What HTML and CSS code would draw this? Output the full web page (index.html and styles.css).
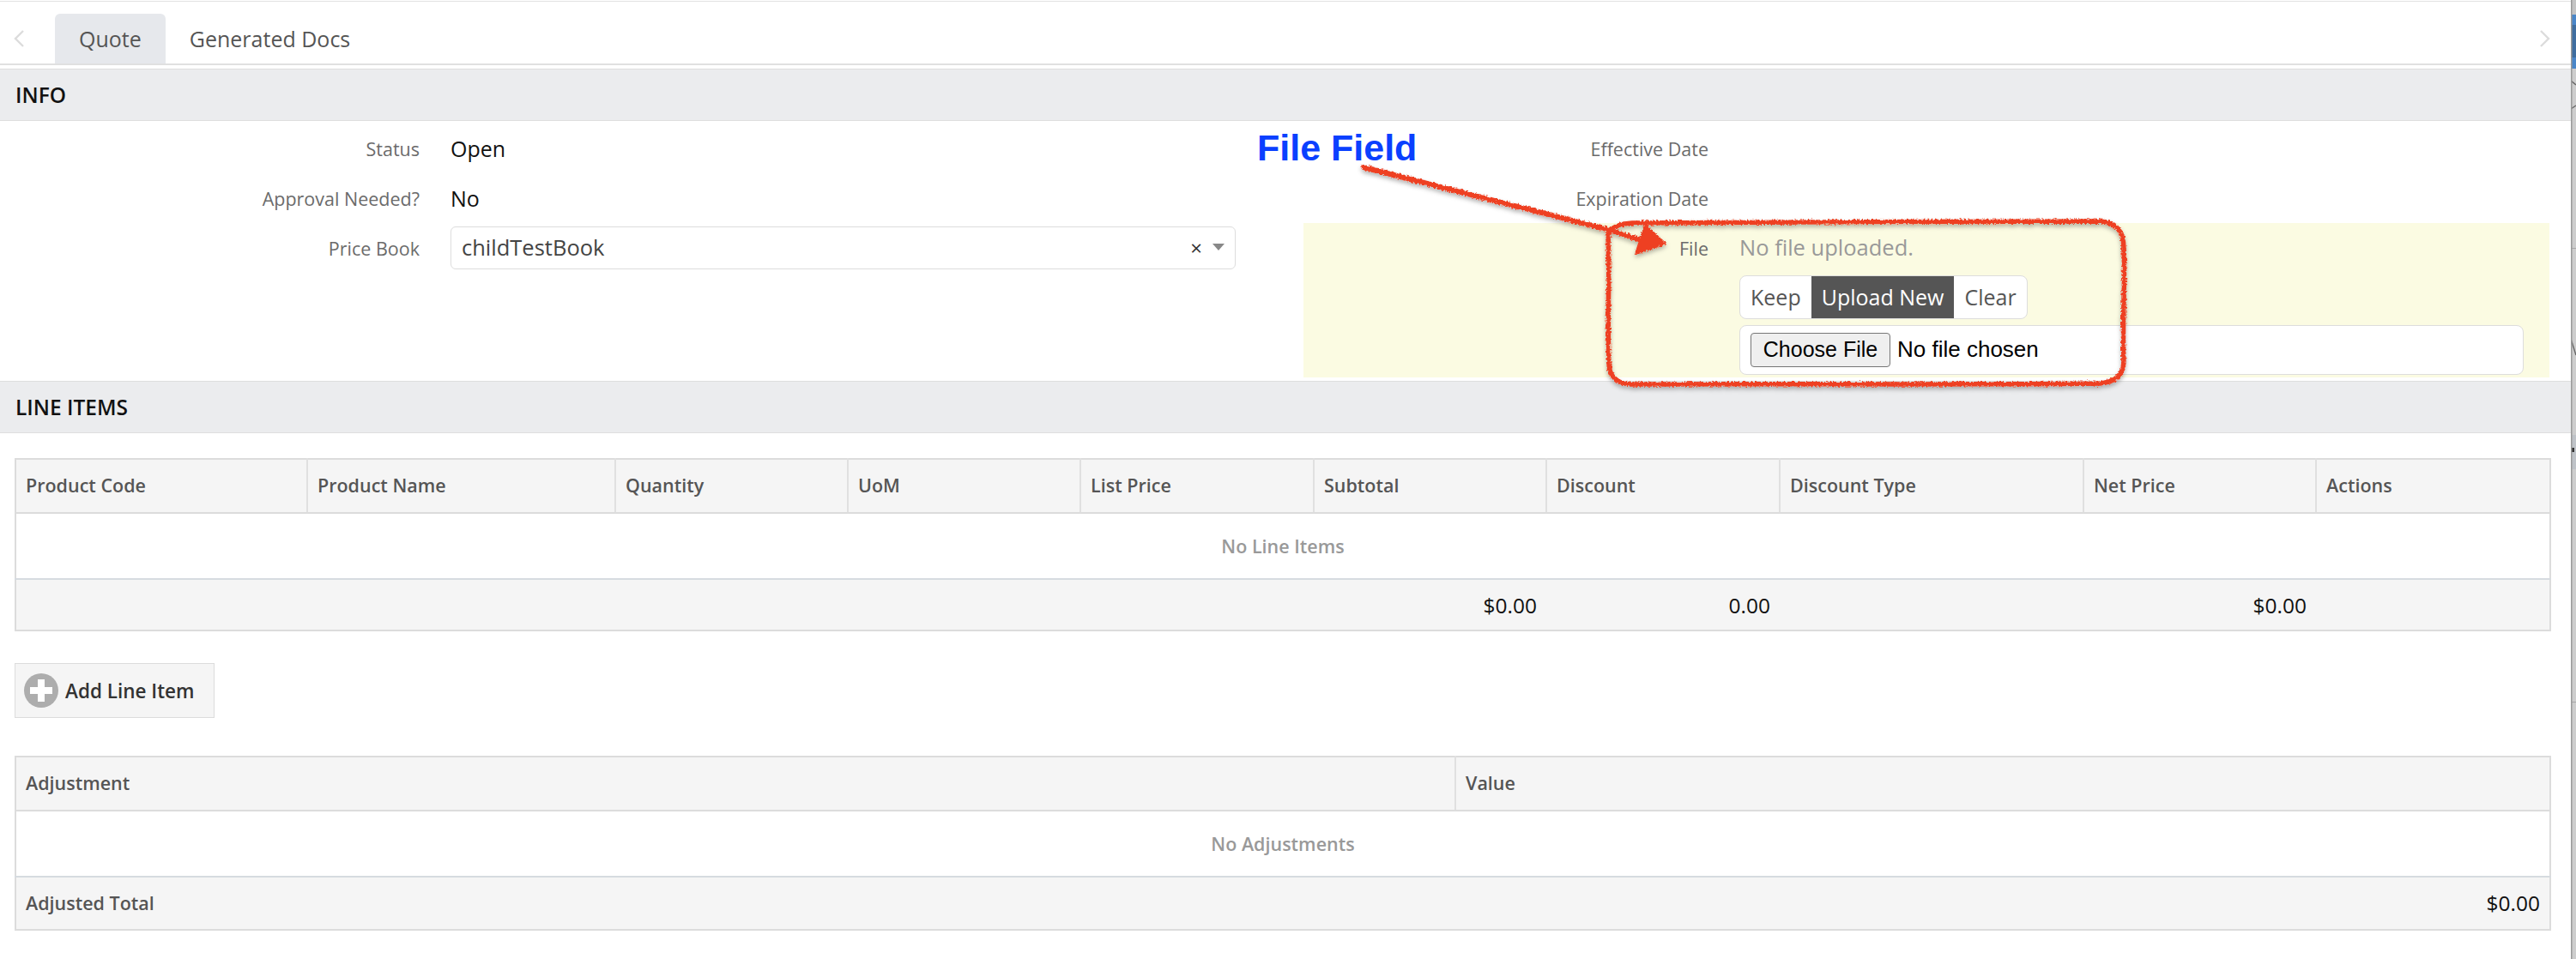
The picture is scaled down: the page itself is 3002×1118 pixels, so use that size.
FILE: index.html
```html
<!DOCTYPE html>
<html lang="en">
<head>
<meta charset="utf-8">
<title>Quote</title>
<link rel="stylesheet" href="styles.css">
</head>
<body>
<div class="page">
  <main class="main">
    <nav class="tabbar">
      <svg class="chev" width="12" height="20" viewBox="0 0 12 20"><path d="M11 1 2 10l9 9" fill="none" stroke="#dcdcdc" stroke-width="2.4"/></svg>
      <div class="tabs">
        <span class="tab tab-active">Quote</span>
        <span class="tab">Generated Docs</span>
      </div>
      <svg class="chev" width="12" height="20" viewBox="0 0 12 20"><path d="M1 1l9 9-9 9" fill="none" stroke="#dcdcdc" stroke-width="2.4"/></svg>
    </nav>

    <h2 class="section">INFO</h2>
    <section class="info">
      <div class="col">
        <div class="row"><span class="label">Status</span><span class="value">Open</span></div>
        <div class="row"><span class="label">Approval Needed?</span><span class="value">No</span></div>
        <div class="row row-select">
          <span class="label">Price Book</span>
          <div class="select">
            <span class="select-text">childTestBook</span>
            <span class="select-x">×</span>
            <span class="select-arrow"></span>
          </div>
        </div>
      </div>
      <div class="col">
        <div class="row"><span class="label">Effective Date</span><span class="value"></span></div>
        <div class="row"><span class="label">Expiration Date</span><span class="value"></span></div>
        <div class="row row-file">
          <span class="label">File</span>
          <div class="file-body">
            <div class="file-none">No file uploaded.</div>
            <div class="btn-group">
              <span class="seg">Keep</span>
              <span class="seg seg-on">Upload New</span>
              <span class="seg">Clear</span>
            </div>
            <div class="file-box">
              <button class="choose" type="button">Choose File</button>
              <span class="chosen">No file chosen</span>
            </div>
          </div>
        </div>
      </div>
    </section>

    <h2 class="section">LINE ITEMS</h2>
    <section class="items">
      <table class="grid grid-lines">
        <colgroup>
          <col class="c1"><col class="c2"><col class="c3"><col class="c4"><col class="c5">
          <col class="c6"><col class="c7"><col class="c8"><col class="c9"><col class="c10">
        </colgroup>
        <thead>
          <tr>
            <th>Product Code</th><th>Product Name</th><th>Quantity</th><th>UoM</th><th>List Price</th>
            <th>Subtotal</th><th>Discount</th><th>Discount Type</th><th>Net Price</th><th>Actions</th>
          </tr>
        </thead>
        <tbody>
          <tr class="empty"><td colspan="10">No Line Items</td></tr>
        </tbody>
        <tfoot>
          <tr>
            <td colspan="5"></td><td class="num">$0.00</td><td class="num">0.00</td><td></td><td class="num">$0.00</td><td></td>
          </tr>
        </tfoot>
      </table>

      <button class="add" type="button">
        <svg width="40" height="40" viewBox="0 0 40 40"><circle cx="20" cy="20" r="20" fill="#adadad"/><path d="M16 7h8v9h9v8h-9v9h-8v-9H7v-8h9z" fill="#fff"/></svg>
        <span>Add Line Item</span>
      </button>

      <table class="grid grid-adj">
        <colgroup><col class="a1"><col class="a2"></colgroup>
        <thead><tr><th>Adjustment</th><th>Value</th></tr></thead>
        <tbody><tr class="empty"><td colspan="2">No Adjustments</td></tr></tbody>
        <tfoot><tr><td class="total-label">Adjusted Total</td><td class="num">$0.00</td></tr></tfoot>
      </table>
    </section>
  </main>

  <aside class="strip">
    <svg width="6" height="1118" viewBox="0 0 6 1118">
      <rect width="6" height="1118" fill="#cdcdcd"/>
      <rect y="0" width="6" height="17" fill="#c4c4c4"/>
      <rect y="17" width="6" height="12" fill="#4a86c8"/>
      <rect y="29" width="6" height="38" fill="#3f6d9f"/>
      <rect y="67" width="6" height="13" fill="#4a86c8"/>
      <path d="M0 94 6 99M0 127 6 123M0 395 6 414" stroke="#666" stroke-width="1.4" fill="none"/>
      <rect y="289" width="6" height="1" fill="#a8a8a8"/>
      <rect y="507" width="6" height="40" fill="#bfc3c8"/>
      <rect y="522" width="4" height="5" fill="#333"/>
      <rect y="818" width="6" height="1" fill="#a8a8a8"/>
      <rect width="1.5" height="1118" fill="#9a9a9a"/>
    </svg>
  </aside>
</div>

<div class="callout">File Field</div>
<svg class="markup" width="3002" height="1118" viewBox="0 0 3002 1118" aria-hidden="true">
  <defs>
    <filter id="rough" x="-5%" y="-20%" width="110%" height="140%">
      <feTurbulence type="fractalNoise" baseFrequency="0.45" numOctaves="2" seed="4" result="n"/>
      <feDisplacementMap in="SourceGraphic" in2="n" scale="5" xChannelSelector="R" yChannelSelector="G" result="d"/>
      <feDropShadow in="d" dx="0" dy="3" stdDeviation="2.5" flood-color="#000" flood-opacity="0.3"/>
    </filter>
  </defs>
  <g filter="url(#rough)" fill="none" stroke="#ee4022" stroke-linecap="round" stroke-linejoin="round">
    <path stroke-width="5.5" d="M1902 260C2050 258 2300 259 2448 258C2466 259 2475 270 2475 290C2477 330 2473 370 2475 422C2474 438 2464 446 2446 447C2300 449 2050 447 1900 448C1884 447 1875 438 1875 424C1873 380 1876 320 1874 276C1875 266 1886 261 1902 260Z"/>
    <path stroke-width="6" d="M1589 195 1875 268 1922 283"/>
    <path stroke-width="2" fill="#ee4022" d="M1917 262 1941 284 1906 296Z"/>
  </g>
</svg>
</body>
</html>
```

FILE: styles.css
```css
* { box-sizing: border-box; }
html, body { margin: 0; padding: 0; background: #fff; }
body {
  position: relative;
  width: 3002px;
  height: 1118px;
  overflow: hidden;
  font-family: "Open Sans", "Liberation Sans", sans-serif;
  color: #111;
}
.page { display: flex; height: 1118px; }
.main { flex: 1; min-width: 0; padding-top: 1px; }
.strip { width: 6px; flex: none; line-height: 0; }
.strip svg { display: block; }

/* Tabs */
.tabbar {
  display: flex;
  align-items: flex-end;
  height: 75px;
  margin-bottom: 4px;
  border-top: 1px solid #e2e2e2;
  border-bottom: 2px solid #e0e0e0;
  padding: 0 24px 0 16px;
  justify-content: space-between;
}
.chev { flex: none; align-self: center; margin-top: 14px; }
.tabs { flex: 1; display: flex; margin-left: 36px; height: 58px; }
.tab {
  display: flex;
  align-items: center;
  padding: 0 28px;
  font-size: 25px;
  color: #555;
  border-radius: 6px 6px 0 0;
}
.tab-active { background: #e6e8ec; }

/* Section bars */
.section {
  margin: 0;
  height: 61px;
  padding: 0 0 0 18px;
  display: flex;
  align-items: center;
  background: #ebecee;
  border-top: 1px solid #dedede;
  border-bottom: 1px solid #dedede;
  font-size: 24.5px;
  font-weight: 600;
  color: #111;
}

/* Info */
.info {
  display: grid;
  grid-template-columns: 1452px 1452px;
  column-gap: 50px;
  height: 303px;
  padding: 3px 25px 0 17px;
}
.col { display: flex; flex-direction: column; }
.row {
  display: grid;
  grid-template-columns: 472px 1fr;
  column-gap: 36px;
  padding-right: 29px;
  height: 58px;
  align-items: center;
}
.label { text-align: right; font-size: 21.5px; color: #6b6b6b; }
.value { font-size: 25px; color: #111; }
.row-select { height: auto; align-items: start; padding-top: 4px; }
.row-select .label { padding-top: 11px; }
.select {
  display: flex;
  align-items: center;
  height: 50px;
  border: 1px solid #ddd;
  border-radius: 6px;
  padding: 0 12px 2px;
  font-size: 25.5px;
  color: #444;
}
.select-text { flex: 1; }
.select-x { font-size: 24px; color: #333; margin-right: 12px; }
.select-arrow {
  width: 0;
  height: 0;
  border-left: 7px solid transparent;
  border-right: 7px solid transparent;
  border-top: 8px solid #888;
}
.row-file {
  height: 180px;
  background: #fbfbe2;
  align-items: start;
}
.row-file .label { padding-top: 15px; }
.file-body { display: flex; flex-direction: column; align-items: flex-start; padding-top: 10px; }
.file-none { font-size: 25.5px; color: #999; height: 51px; line-height: 36px; }
.btn-group {
  display: flex;
  height: 51px;
  border: 1px solid #ddd;
  border-radius: 8px;
  background: #fff;
  overflow: hidden;
}
.seg {
  display: flex;
  align-items: center;
  padding: 0 12px 1px;
  font-size: 25px;
  color: #555;
}
.seg-on { background: #555; color: #fff; }
.file-box {
  display: flex;
  align-items: center;
  width: 914px;
  height: 58px;
  margin-top: 7px;
  padding: 0 0 1px 12px;
  border: 1px solid #ddd;
  border-radius: 8px;
  background: #fff;
  font-family: "Liberation Sans", Arial, sans-serif;
  font-size: 25px;
  color: #000;
}
.choose {
  width: 163px;
  height: 40px;
  padding: 0;
  margin-right: 8px;
  font: inherit;
  color: #000;
  background: #efefef;
  border: 1px solid #767676;
  border-radius: 4px;
}
.chosen { font-size: 26px; }

/* Tables */
.items { padding: 29px 25px 0 17px; }
.grid {
  width: 2954px;
  table-layout: fixed;
  border-collapse: collapse;
  border: 2px solid #dcdcdc;
}
.grid th {
  height: 63px;
  padding: 0 11px 2px;
  text-align: left;
  font-size: 21.5px;
  font-weight: 600;
  color: #555;
  background: #f5f5f5;
  border-left: 2px solid #e0e0e0;
  border-bottom: 2px solid #dcdcdc;
}
.grid th:first-child { border-left: 0; }
.empty td {
  height: 77px;
  text-align: center;
  font-size: 21.5px;
  font-weight: 600;
  color: #999;
  border-bottom: 2px solid #d6dbe0;
}
.grid tfoot td {
  height: 60px;
  padding: 0 11px;
  background: #f5f5f5;
}
.grid .num { text-align: right; font-size: 24.5px; color: #111; }
.grid .total-label { font-size: 21.5px; font-weight: 600; color: #555; }
.grid-adj tfoot td { height: 62px; padding-bottom: 2px; }
.c1 { width: 340px; } .c2 { width: 359px; } .c3 { width: 271px; } .c4 { width: 271px; }
.c5 { width: 272px; } .c6 { width: 271px; } .c7 { width: 272px; } .c8 { width: 354px; }
.c9 { width: 271px; } .c10 { width: 273px; }
.a1 { width: 1678px; } .a2 { width: 1276px; }

.add {
  display: flex;
  align-items: center;
  gap: 8px;
  width: 233px;
  height: 64px;
  margin: 37px 0 44px;
  padding: 0 0 0 10px;
  background: #f5f5f5;
  border: 1px solid #dcdcdc;
  font-family: inherit;
  font-size: 22.5px;
  font-weight: 600;
  color: #333;
}

/* Screenshot annotation drawn over the page */
.callout {
  position: absolute;
  left: 1465px;
  top: 147px;
  font-family: "Liberation Sans", Arial, sans-serif;
  font-size: 43px;
  line-height: 50px;
  font-weight: 700;
  color: #0a40ff;
}
.markup { position: absolute; left: 0; top: 0; pointer-events: none; }
```
